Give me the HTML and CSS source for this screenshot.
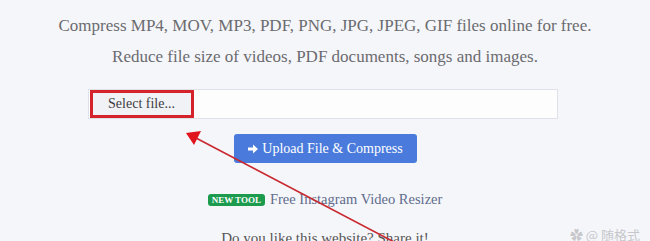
FILE: index.html
```html
<!DOCTYPE html>
<html lang="en">
<head>
  <meta charset="UTF-8" />
  <title>Compress files</title>
  <link rel="stylesheet" href="styles.css">
</head>
<body>

<div class="page">
  <p class="lead">Compress MP4, MOV, MP3, PDF, PNG, JPG, JPEG, GIF files online for free.</p>
  <p class="lead">Reduce file size of videos, PDF documents, songs and images.</p>

  <div class="file-field">
    <span class="file-btn">Select file...</span>
  </div>

  <button class="upload">
    <svg class="ico" viewBox="0 0 12 12" width="12" height="12">
      <path d="M1 4.4h5V1.5L11 6 6 10.5V7.6H1z" fill="#fff"/>
    </svg>
    Upload File &amp; Compress
  </button>

  <div class="tool">
    <span class="badge">NEW TOOL</span>
    <a href="#" class="tool-link">Free Instagram Video Resizer</a>
  </div>

  <p class="share">Do you like this website? Share it!</p>
</div>

<!-- annotation arrow drawn over the page -->
<svg class="arrow" width="650" height="241" viewBox="0 0 650 241">
  <line x1="196" y1="138" x2="396" y2="243" stroke="#c8282f" stroke-width="1.6"/>
  <polygon points="186,133 201,131 194,145" fill="#e0141c"/>
</svg>

<div class="mark">✿ @ 随格式</div>

</body>
</html>
```

FILE: styles.css
```css
* { box-sizing: border-box; }
body {
  margin: 0;
  background: #f5f6fa;
  color: #6b6b6f;
  font-family: 'Liberation Serif', serif;
  height: 241px;
  overflow: hidden;
  position: relative;
}
.page {
  display: flex;
  flex-direction: column;
  align-items: center;
  padding-top: 10px;
}
.lead {
  margin: 0;
  font-size: 17px;
  line-height: 31px;
}

.file-field {
  width: 470px;
  height: 30px;
  margin-top: 17px;
  margin-right: 5px;
  background: #fdfdfe;
  border: 1px solid #dfe1e8;
  display: flex;
  align-items: center;
  padding-left: 1px;
}
.file-btn {
  width: 104px;
  height: 28px;
  border: 3px solid #d4232b;
  background: #f1f2f6;
  color: #3d3d40;
  font-size: 14px;
  display: flex;
  align-items: center;
  justify-content: center;
}

.upload {
  margin-top: 15px;
  width: 183px;
  height: 29px;
  border: none;
  border-radius: 3px;
  background: #4a7bdc;
  color: #fff;
  font-family: 'Liberation Serif', serif;
  font-size: 14px;
  display: flex;
  align-items: center;
  justify-content: center;
  gap: 3px;
}

.tool {
  margin-top: 28px;
  display: flex;
  align-items: center;
  gap: 5px;
  font-size: 14.5px;
}
.badge {
  background: #1c9b4e;
  color: #fff;
  font-size: 9px;
  font-weight: bold;
  padding: 1px 4px;
  border-radius: 3px;
}
.tool-link {
  color: #5f6c8c;
  text-decoration: none;
}

.share {
  margin: 22px 0 0;
  font-size: 15px;
  color: #555;
}

.arrow {
  position: absolute;
  left: 0;
  top: 0;
}
.mark {
  position: absolute;
  right: 10px;
  bottom: -3px;
  font-family: 'Noto Sans CJK SC', sans-serif;
  font-size: 13px;
  color: #c7c7cb;
}
```
